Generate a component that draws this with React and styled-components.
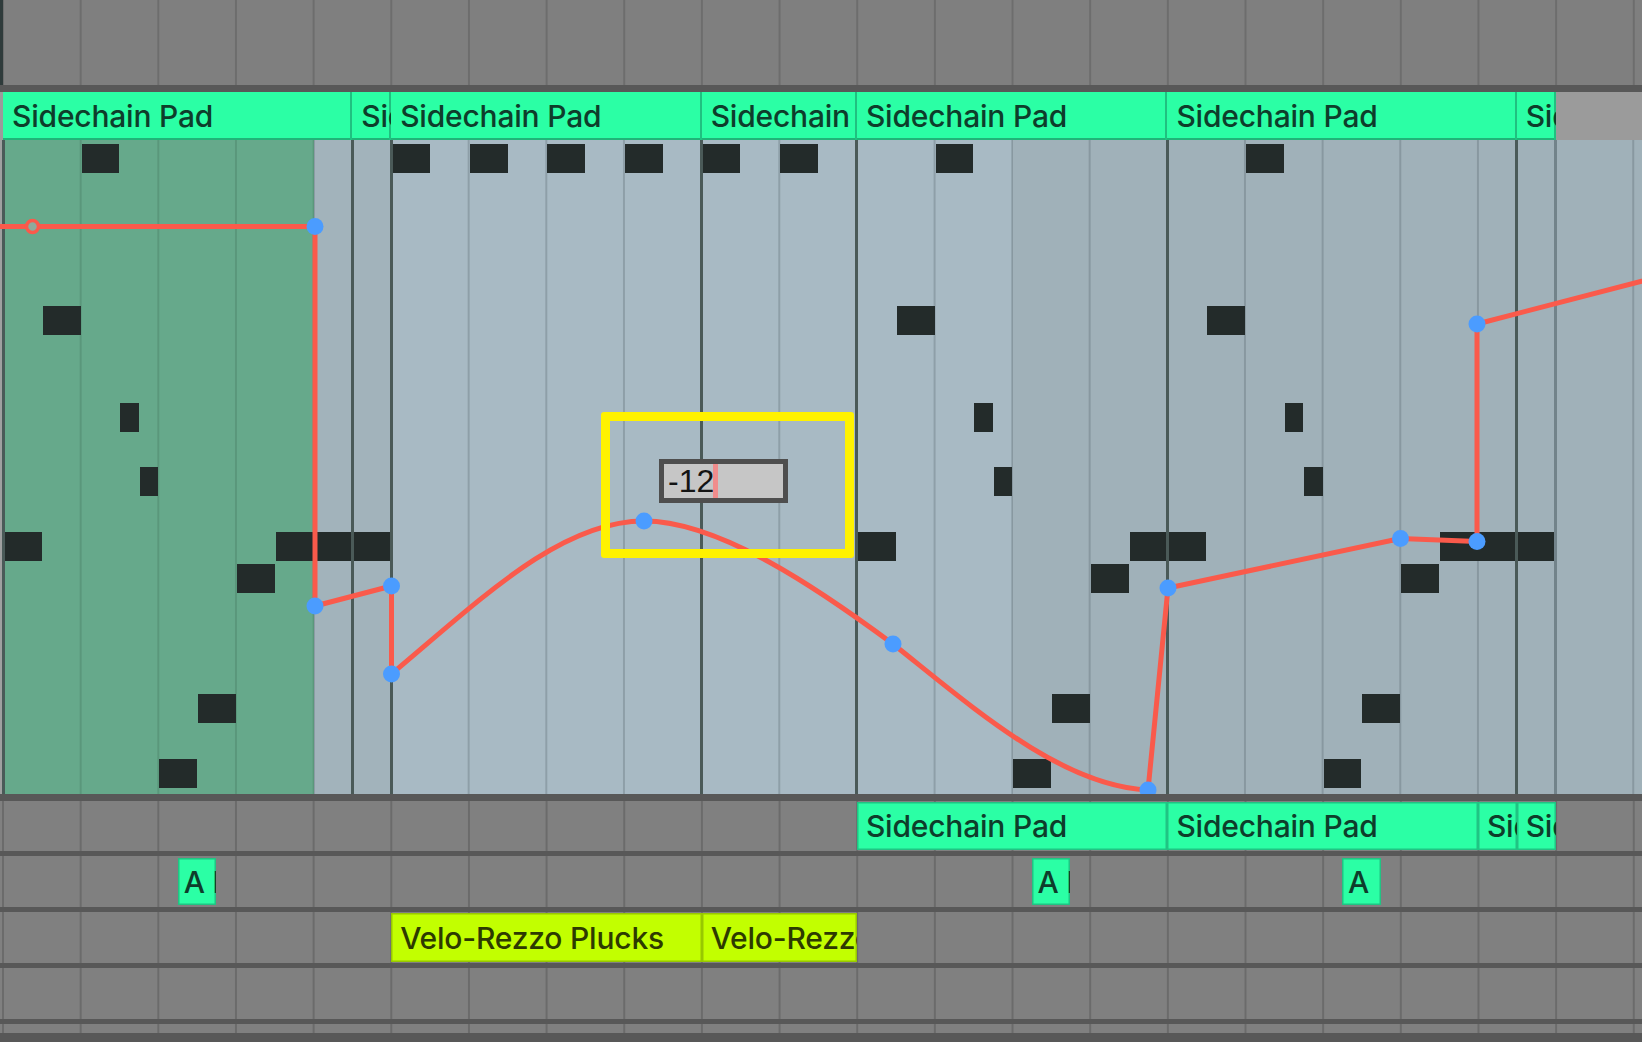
import React from 'react';
import styled, { createGlobalStyle } from 'styled-components';

// one column = a quarter of a beat
const Q = 19.415;
const COLS = 86;
const BEAT = Q * 4;

const GlobalStyle = createGlobalStyle`
	html, body {
		margin: 0;
		padding: 0;
		background: #5c5c5c;
		overflow: hidden;
	}
	body {
		font-family: Inter, "Noto Sans", sans-serif;
	}
`;

const Arrangement = styled.div`
	width: 1642px;
	height: 1042px;
	display: flex;
	flex-direction: column;
	background: #585858;
	overflow: hidden;
`;

const Lane = styled.div`
	display: grid;
	grid-template-columns: repeat(${COLS}, ${Q}px);
	grid-template-rows: 100%;
	box-sizing: border-box;
	height: ${(p) => p.$h}px;
	margin-top: ${(p) => p.$gap || 0}px;
	padding-left: 3px;
	flex-shrink: 0;
	overflow: hidden;
	background-color: ${(p) => p.$bg || '#808080'};
	background-image: linear-gradient(to right, ${(p) => p.$line || '#6b6b6b'} 2px, transparent 2px);
	background-size: ${BEAT}px 100%;
	background-position: 2px 0;
`;

const Ruler = styled(Lane)`
	box-shadow: inset 3px 0 0 #2f3b3b;
`;

const HeaderLane = styled(Lane)`
	background-image: none;
	background-color: #9b9b9b;
`;

const ClipLabel = styled.div`
	grid-column: ${(p) => p.$start + 1} / span ${(p) => p.$span};
	grid-row: 1;
	display: flex;
	align-items: center;
	box-sizing: border-box;
	margin: ${(p) => p.$inset || 0}px 0;
	padding-left: ${(p) => p.$pad || 9}px;
	overflow: hidden;
	white-space: nowrap;
	font-size: 30px;
	font-weight: 500;
	letter-spacing: -0.2px;
	color: ${(p) => (p.$kind === 'velo' ? '#2d3a00' : '#0e3d2b')};
	background: ${(p) => (p.$kind === 'velo' ? '#c2ff00' : '#2bffa5')};
	box-shadow: inset 0 0 0 1.5px ${(p) => (p.$kind === 'velo' ? '#97c800' : '#20c483')};
`;

const HeaderClip = styled(ClipLabel)`
	box-shadow: inset -2px 0 0 #20c080, inset 0 -2px 0 #20b478;
`;

const BodyLane = styled.div`
	position: relative;
	display: grid;
	grid-template-columns: repeat(${COLS}, ${Q}px);
	grid-template-rows: 4px repeat(20, 32.35px) 1fr;
	height: 654px;
	padding-left: 3px;
	box-sizing: border-box;
	flex-shrink: 0;
	overflow: hidden;
	background: #9fa0a0;
`;

const Shade = styled.div`
	grid-column: ${(p) => p.$start + 1} / span ${(p) => p.$span};
	grid-row: 1 / -1;
	background-color: ${(p) => p.$bg};
	background-image: linear-gradient(to right, ${(p) => p.$line} 2px, transparent 2px);
	background-size: ${BEAT}px 100%;
	background-position: -1px 0;
`;

const ClipEdge = styled.div`
	grid-column: ${(p) => p.$start + 1};
	grid-row: 1 / -1;
	width: 3px;
	margin-left: -1.5px;
	background: ${(p) => (p.$soft ? '#72838a' : '#4a5a58')};
	z-index: 2;
`;

const Note = styled.div`
	grid-column: ${(p) => p.$q + 1} / span ${(p) => p.$span};
	grid-row: ${(p) => p.$row + 2};
	height: 29px;
	align-self: start;
	margin-left: 1px;
	background: #232b2a;
	z-index: 1;
`;

const Automation = styled.svg`
	position: absolute;
	left: 0;
	top: 0;
	width: 100%;
	height: 100%;
	z-index: 3;
	pointer-events: none;
`;

const Highlight = styled.div`
	position: absolute;
	left: 601px;
	top: 272px;
	width: 253px;
	height: 146px;
	box-sizing: border-box;
	border: 9px solid #fff200;
	border-radius: 3px;
	padding: 38px 0 0 49px;
	z-index: 4;
`;

const ValueField = styled.div`
	width: 129px;
	height: 44px;
	box-sizing: border-box;
	border: 5px solid #4e4e4e;
	background: #c6c6c6;
	display: flex;
	align-items: stretch;
	padding-left: 4px;
	font-family: "Liberation Sans", Arial, sans-serif;
	font-size: 32px;
	color: #141414;
`;

const ValueText = styled.span`
	line-height: 34px;
`;

const Caret = styled.span`
	width: 5px;
	margin-left: -1px;
	background: #f08c8c;
`;

const notePattern = (base) => [
	[12, base, 2],
	[5, base + 2, 2],
	[0, base + 4, 2],
	[8, base + 6, 1],
	[10, base + 7, 1],
	[19, base + 8, 2],
	[17, base + 10, 2],
	[13, base + 12, 2],
];

const notes = [
	...notePattern(0),
	[12, 14, 4],
	[12, 18, 2],
	[0, 20, 2],
	[0, 24, 2],
	[0, 28, 2],
	[0, 32, 2],
	[0, 36, 2],
	[0, 40, 2],
	...notePattern(44),
	[12, 58, 2],
	...notePattern(60),
	[12, 74, 4],
	[12, 78, 2],
];

const headerClips = [
	{ start: 0, span: 18, name: 'Sidechain Pad' },
	{ start: 18, span: 2, name: 'Sidechain Pad' },
	{ start: 20, span: 16, name: 'Sidechain Pad' },
	{ start: 36, span: 8, name: 'Sidechain Pad' },
	{ start: 44, span: 16, name: 'Sidechain Pad' },
	{ start: 60, span: 18, name: 'Sidechain Pad' },
	{ start: 78, span: 2, name: 'Sidechain Pad' },
];

const shades = [
	{ start: 0, span: 16, bg: '#66a98b', line: '#5a977b' },
	{ start: 16, span: 4, bg: '#a2b3bb', line: '#8b9ba3' },
	{ start: 20, span: 32, bg: '#a8bac4', line: '#8e9fa8' },
	{ start: 52, span: 34, bg: '#a0b1b9', line: '#8898a0' },
];

const edges = [0, 18, 20, 36, 44, 60, 78];

const lowerTracks = [
	{
		h: 50,
		gap: 7,
		clips: [
			{ start: 44, span: 16, name: 'Sidechain Pad' },
			{ start: 60, span: 16, name: 'Sidechain Pad' },
			{ start: 76, span: 2, name: 'Sidechain Pad' },
			{ start: 78, span: 2, name: 'Sidechain Pad' },
		],
		inset: 1,
	},
	{
		h: 51,
		gap: 5,
		clips: [
			{ start: 9, span: 2, name: 'A Loop', pad: 6 },
			{ start: 53, span: 2, name: 'A Loop', pad: 6 },
			{ start: 69, span: 2, name: 'A', pad: 6 },
		],
		inset: 2,
	},
	{
		h: 51,
		gap: 5,
		clips: [
			{ start: 20, span: 16, name: 'Velo-Rezzo Plucks', kind: 'velo' },
			{ start: 36, span: 8, name: 'Velo-Rezzo Plucks', kind: 'velo' },
		],
		inset: 1,
	},
	{ h: 51, gap: 5, clips: [] },
	{ h: 9, gap: 5, clips: [] },
];

// automation breakpoints, lane-local coordinates
const points = [
	[315, 86.5],
	[315, 466],
	[391.5, 446],
	[391.5, 534],
	[644, 381],
	[893, 504],
	[1148, 650],
	[1168, 448],
	[1400.5, 398.5],
	[1477, 401.5],
	[1477, 184],
];

const curve = [
	'M -10 86.5 L 315 86.5 L 315 466 L 391.5 446 L 391.5 534',
	'C 480 460 560 381 644 381',
	'C 720 381 820 450 893 504',
	'C 970 565 1060 646 1148 650',
	'L 1168 448 L 1400.5 398.5 L 1477 401.5 L 1477 184 L 1700 126',
].join(' ');

const App = () => (
	<>
		<GlobalStyle />
		<Arrangement>
			<Ruler $h={85} $bg='#7f7f7f' $line='#6d6d6d' />
			<HeaderLane $h={48} $gap={7}>
				{headerClips.map((c) => (
					<HeaderClip key={c.start} $start={c.start} $span={c.span}>
						{c.name}
					</HeaderClip>
				))}
			</HeaderLane>
			<BodyLane>
				{shades.map((s) => (
					<Shade key={s.start} $start={s.start} $span={s.span} $bg={s.bg} $line={s.line} />
				))}
				{edges.map((e) => (
					<ClipEdge key={e} $start={e} />
				))}
				<ClipEdge $start={80} $soft />
				{notes.map(([row, q, span]) => (
					<Note key={`${row}-${q}`} $row={row} $q={q} $span={span} />
				))}
				<Automation>
					<path d={curve} fill='none' stroke='#fa5a4b' strokeWidth='5' strokeLinejoin='round' />
					<circle cx='32.5' cy='86.5' r='6' fill='#8eab9c' stroke='#fa5a4b' strokeWidth='3.5' />
					{points.map(([x, y]) => (
						<circle key={`${x}-${y}`} cx={x} cy={y} r='8.5' fill='#4b9cff' />
					))}
				</Automation>
				<Highlight>
					<ValueField>
						<ValueText>-12</ValueText>
						<Caret />
					</ValueField>
				</Highlight>
			</BodyLane>
			{lowerTracks.map((t, i) => (
				<Lane key={i} $h={t.h} $gap={t.gap}>
					{t.clips.map((c) => (
						<ClipLabel
							key={c.start}
							$start={c.start}
							$span={c.span}
							$kind={c.kind}
							$inset={t.inset}
							$pad={c.pad}
						>
							{c.name}
						</ClipLabel>
					))}
				</Lane>
			))}
		</Arrangement>
	</>
);

export default App;
